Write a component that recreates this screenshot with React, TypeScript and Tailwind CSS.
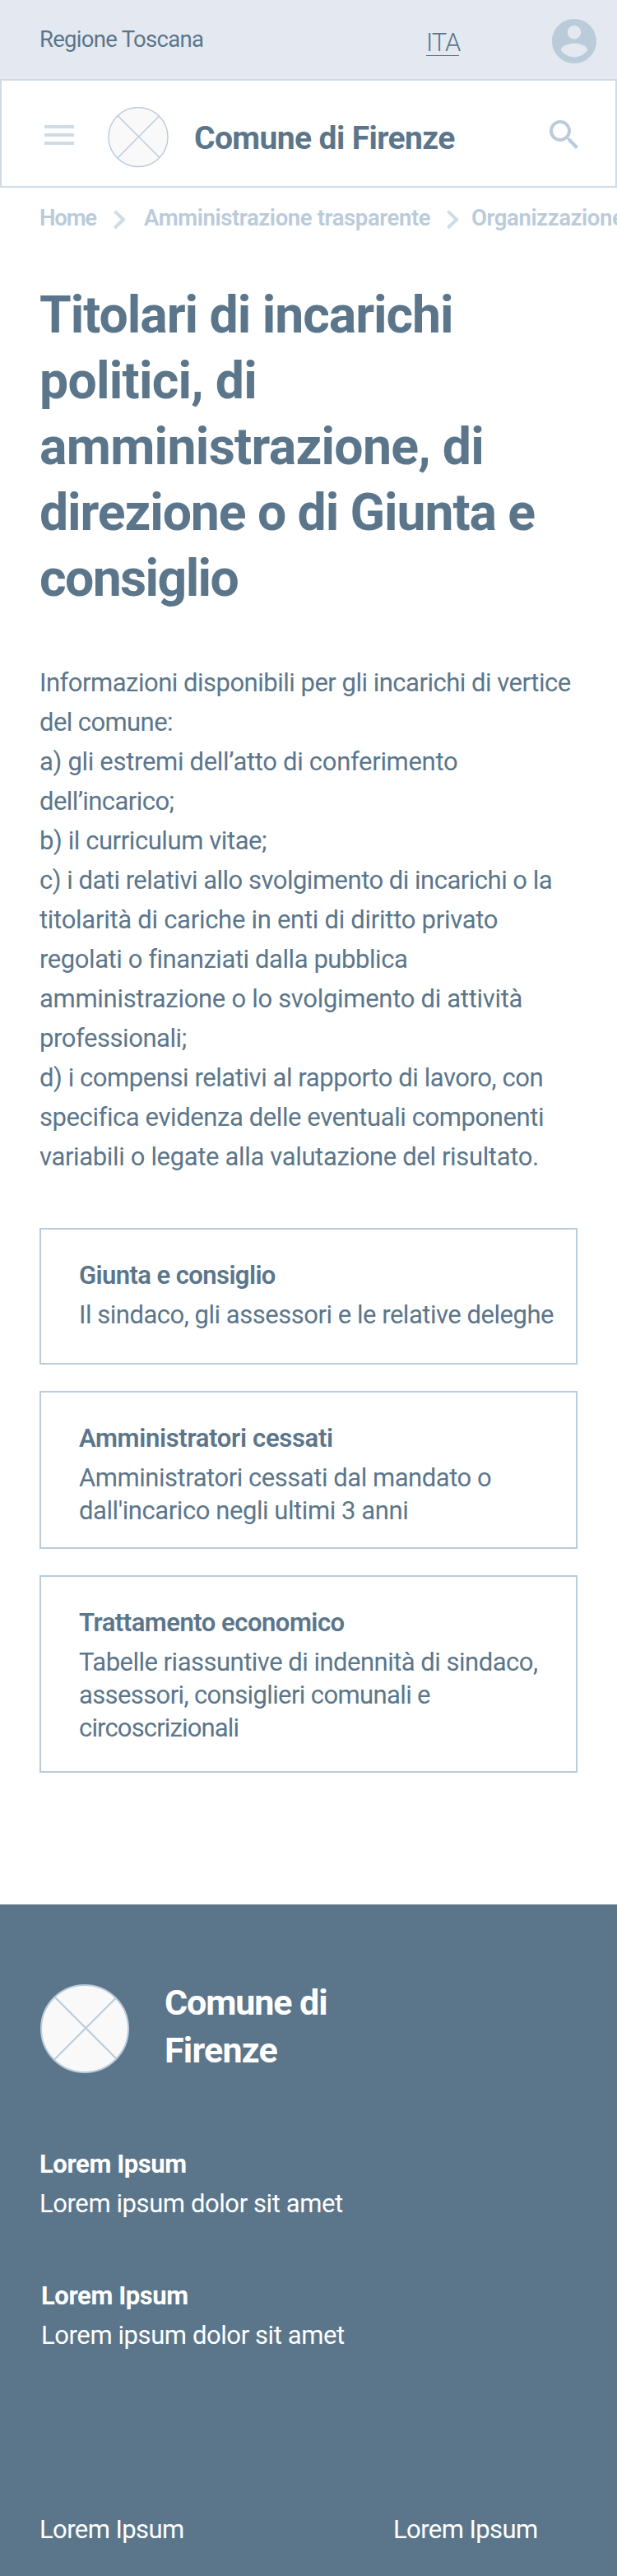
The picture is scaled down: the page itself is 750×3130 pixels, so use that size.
type Line = { text: string; tracking: string };

const titleLines: Line[] = [
  { text: "Titolari di incarichi", tracking: "tracking-[-1.03px]" },
  { text: "politici, di", tracking: "tracking-[-0.75px]" },
  { text: "amministrazione, di", tracking: "tracking-[-0.7px]" },
  { text: "direzione o di Giunta e", tracking: "tracking-[-1.08px]" },
  { text: "consiglio", tracking: "tracking-[-1.6px]" },
];

const introLines: Line[] = [
  { text: "Informazioni disponibili per gli incarichi di vertice", tracking: "tracking-[-0.5px]" },
  { text: "del comune:", tracking: "tracking-[-0.59px]" },
  { text: "a) gli estremi dell’atto di conferimento", tracking: "tracking-[-0.31px]" },
  { text: "dell’incarico;", tracking: "tracking-[-0.57px]" },
  { text: "b) il curriculum vitae;", tracking: "tracking-[-0.42px]" },
  { text: "c) i dati relativi allo svolgimento di incarichi o la", tracking: "tracking-[-0.5px]" },
  { text: "titolarità di cariche in enti di diritto privato", tracking: "tracking-[-0.28px]" },
  { text: "regolati o finanziati dalla pubblica", tracking: "tracking-[-0.43px]" },
  { text: "amministrazione o lo svolgimento di attività", tracking: "tracking-[-0.3px]" },
  { text: "professionali;", tracking: "tracking-[-0.44px]" },
  { text: "d) i compensi relativi al rapporto di lavoro, con", tracking: "tracking-[-0.43px]" },
  { text: "specifica evidenza delle eventuali componenti", tracking: "tracking-[-0.41px]" },
  { text: "variabili o legate alla valutazione del risultato.", tracking: "tracking-[-0.35px]" },
];

const cards: { title: Line; body: Line[]; height: string }[] = [
  {
    title: { text: "Giunta e consiglio", tracking: "tracking-[-0.58px]" },
    body: [{ text: "Il sindaco, gli assessori e le relative deleghe", tracking: "tracking-[-0.48px]" }],
    height: "h-[166px]",
  },
  {
    title: { text: "Amministratori cessati", tracking: "tracking-[-0.31px]" },
    body: [
      { text: "Amministratori cessati dal mandato o", tracking: "tracking-[-0.46px]" },
      { text: "dall'incarico negli ultimi 3 anni", tracking: "tracking-[-0.43px]" },
    ],
    height: "h-48",
  },
  {
    title: { text: "Trattamento economico", tracking: "tracking-[-0.49px]" },
    body: [
      { text: "Tabelle riassuntive di indennità di sindaco,", tracking: "tracking-[-0.51px]" },
      { text: "assessori, consiglieri comunali e", tracking: "tracking-[-0.62px]" },
      { text: "circoscrizionali", tracking: "tracking-[-0.85px]" },
    ],
    height: "h-60",
  },
];

function Lines({ lines }: { lines: Line[] }) {
  return (
    <>
      {lines.map((line) => (
        <span key={line.text} className={`block whitespace-nowrap ${line.tracking}`}>
          {line.text}
        </span>
      ))}
    </>
  );
}

function Chevron() {
  return (
    <svg className="mt-[10px] h-6 w-[15px] shrink-0" viewBox="0 0 15 24" fill="none" stroke="#cfdce6" strokeWidth="4">
      <path d="M1.4 1.6 12 11.8 1.4 22" />
    </svg>
  );
}

function AccountIcon() {
  return (
    <svg className="mt-[23px] size-[54px] shrink-0" viewBox="2 2 20 20" fill="#bacbda">
      <path d="M12 2C6.48 2 2 6.48 2 12s4.48 10 10 10 10-4.48 10-10S17.52 2 12 2zm0 3c1.66 0 3 1.34 3 3s-1.34 3-3 3-3-1.34-3-3 1.34-3 3-3zm0 14.2c-2.5 0-4.71-1.28-6-3.22.03-1.99 4-3.08 6-3.08 1.99 0 5.97 1.09 6 3.08-1.29 1.94-3.5 3.22-6 3.22z" />
    </svg>
  );
}

function SearchIcon() {
  return (
    <svg className="mt-4 size-[35px] shrink-0" viewBox="3 3 17.5 17.5" fill="#bacbda">
      <path d="M15.5 14h-.79l-.28-.27C15.41 12.59 16 11.11 16 9.5 16 5.91 13.09 3 9.5 3S3 5.91 3 9.5 5.91 16 9.5 16c1.61 0 3.09-.59 4.23-1.57l.27.28v.79l5 4.99L20.49 19l-4.99-5zm-6 0C7.01 14 5 11.99 5 9.5S7.01 5 9.5 5 14 7.01 14 9.5 11.99 14 9.5 14z" />
    </svg>
  );
}

export default function App() {
  return (
    <div className="flex h-[3130px] w-[750px] flex-col overflow-hidden bg-white font-['Roboto',sans-serif] text-[#5b768b]">
      <div className="flex h-24 shrink-0 bg-[#e4e9f1] pl-12">
        <div className="w-[470px] pt-7 text-[27.5px] leading-10 tracking-[-0.71px]">Regione Toscana</div>
        <div className="w-[153px] pt-9">
          <a className="block w-10 border-b border-[#5b768b] text-[31px] leading-[31px] font-light tracking-[-1.1px] whitespace-nowrap">
            ITA
          </a>
        </div>
        <AccountIcon />
      </div>

      <header className="flex h-[132px] shrink-0 items-start border-2 border-[#cfdce6] pt-8 pl-[52px]">
        <div className="mt-[22px] flex w-9 flex-col gap-1.5">
          <div className="h-1 bg-[#cfdce6]" />
          <div className="h-1 bg-[#cfdce6]" />
          <div className="h-1 bg-[#cfdce6]" />
        </div>
        <svg className="ml-[41px] size-[74px]" viewBox="0 0 74 74" fill="none" stroke="#bacbda" strokeWidth="1.4">
          <circle cx="37" cy="36.5" r="36" fill="#f9f9f9" />
          <path d="M12 10.5 63 61.5M62.5 11 12 62" />
        </svg>
        <div className="mt-[14px] ml-[31px] w-[432px] text-[39px] leading-[48px] font-bold tracking-[-0.6px]">
          Comune di Firenze
        </div>
        <SearchIcon />
      </header>

      <nav className="mt-[17px] flex h-10 shrink-0 overflow-hidden pl-12 text-[27.5px] leading-10 font-semibold whitespace-nowrap text-[#bacbda]">
        <span className="w-[90px] shrink-0 tracking-[-1.2px]">Home</span>
        <Chevron />
        <span className="ml-[22px] w-[368px] shrink-0 tracking-[-0.37px]">Amministrazione trasparente</span>
        <Chevron />
        <span className="ml-[15px] tracking-[-0.4px]">Organizzazione</span>
      </nav>

      <main className="flex flex-col px-12">
        <h1 className="mt-[58px] text-[62.5px] leading-[80px] font-bold">
          <Lines lines={titleLines} />
        </h1>
        <p className="mt-[63px] text-[31px] leading-[48px]">
          <Lines lines={introLines} />
        </p>
        <div className="mt-[62px] flex flex-col gap-8">
          {cards.map((card) => (
            <section
              key={card.title.text}
              className={`flex flex-col gap-2 border-2 border-[#bacbda] pt-9 pl-[46px] text-[31px] leading-10 ${card.height}`}
            >
              <h2 className="font-semibold">
                <Lines lines={[card.title]} />
              </h2>
              <p>
                <Lines lines={card.body} />
              </p>
            </section>
          ))}
        </div>
      </main>

      <footer className="mt-40 flex grow flex-col bg-[#5b768b] px-12 pt-[90px] text-[31px] leading-[48px] text-white">
        <div className="flex h-[116px] items-start">
          <svg className="mt-[7px] size-[110px]" viewBox="0 0 110 110" fill="none" stroke="#bacbda" strokeWidth="2">
            <circle cx="55" cy="54" r="53" fill="#f9f9f9" />
            <path d="M18.5 15.5 93.5 90.5M93 16.5 18 91.5" />
          </svg>
          <div className="ml-[42px] text-[43px] leading-[58px] font-bold">
            <Lines
              lines={[
                { text: "Comune di", tracking: "tracking-[-1.1px]" },
                { text: "Firenze", tracking: "tracking-[-0.78px]" },
              ]}
            />
          </div>
        </div>
        <div className="mt-[86px]">
          <h3 className="font-bold tracking-[-0.41px]">Lorem Ipsum</h3>
          <p className="tracking-[-0.41px]">Lorem ipsum dolor sit amet</p>
        </div>
        <div className="mt-16 ml-0.5">
          <h3 className="font-bold tracking-[-0.41px]">Lorem Ipsum</h3>
          <p className="tracking-[-0.41px]">Lorem ipsum dolor sit amet</p>
        </div>
        <div className="mt-[188px] flex tracking-[-0.58px]">
          <span className="w-[430px]">Lorem Ipsum</span>
          <span>Lorem Ipsum</span>
        </div>
      </footer>
    </div>
  );
}
